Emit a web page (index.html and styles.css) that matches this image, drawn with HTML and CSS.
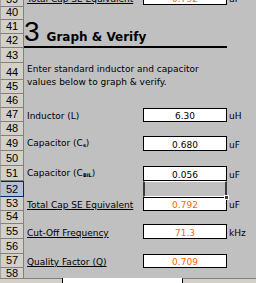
FILE: index.html
```html
<!DOCTYPE html>
<html lang="en">
<head>
  <meta charset="UTF-8" />
  <title>Graph &amp; Verify</title>
  <link rel="stylesheet" href="styles.css">
</head>

<body>
  <div class="window">
    <div class="sheet">
      <!-- row numbers -->
      <div class="row-heads">
        <div class="rh h15">39</div>
        <div class="rh h13">40</div>
        <div class="rh h14">41</div>
        <div class="rh h14">42</div>
        <div class="rh h15">43</div>
        <div class="rh h17">44</div>
        <div class="rh h14">45</div>
        <div class="rh h14">46</div>
        <div class="rh h14">47</div>
        <div class="rh h14">48</div>
        <div class="rh h15">49</div>
        <div class="rh h15">50</div>
        <div class="rh h15">51</div>
        <div class="rh h16 sel">52</div>
        <div class="rh h14">53</div>
        <div class="rh h13">54</div>
        <div class="rh h15">55</div>
        <div class="rh h15">56</div>
        <div class="rh h14">57</div>
        <div class="rh h10 last">58</div>
      </div>

      <!-- cells -->
      <div class="cells">
        <div class="row h13">
          <div class="label"><u>Total Cap SE Equivalent</u></div>
          <div class="box out">0.792</div>
          <div class="unit">uF</div>
        </div>
        <div class="row h15"></div>

        <div class="heading">
          <span class="num">3</span>
          <span class="title">Graph &amp; Verify</span>
        </div>

        <div class="row h15"></div>

        <p class="intro">Enter standard inductor and capacitor<br>values below to graph &amp; verify.</p>

        <div class="row h14"></div>
        <div class="row h14">
          <div class="label">Inductor (L)</div>
          <div class="box">6.30</div>
          <div class="unit">uH</div>
        </div>
        <div class="row h14"></div>
        <div class="row h15">
          <div class="label">Capacitor (C<sub>s</sub>)</div>
          <div class="box">0.680</div>
          <div class="unit">uF</div>
        </div>
        <div class="row h15"></div>
        <div class="row h15">
          <div class="label">Capacitor (C<sub>BIL</sub>)</div>
          <div class="box">0.056</div>
          <div class="unit">uF</div>
        </div>
        <div class="row h16">
          <div class="label"></div>
          <div class="selection"><span class="handle"></span></div>
        </div>
        <div class="row h14">
          <div class="label"><u>Total Cap SE Equivalent</u></div>
          <div class="box out">0.792</div>
          <div class="unit">uF</div>
        </div>
        <div class="row h13"></div>
        <div class="row h15">
          <div class="label"><u>Cut-Off Frequency</u></div>
          <div class="box out">71.3</div>
          <div class="unit">kHz</div>
        </div>
        <div class="row h15"></div>
        <div class="row h14">
          <div class="label"><u>Quality Factor (Q)</u></div>
          <div class="box out">0.709</div>
        </div>
        <div class="row h10"></div>
      </div>
    </div>

    <div class="tabs">
      <div class="tab-nav"></div>
      <div class="tab active"></div>
      <div class="tab"></div>
    </div>
  </div>
</body>
</html>
```

FILE: styles.css
```css
:root {
  --sheet-grey: #c0c0c0;
  --head-grey: #d4d0c8;
  --head-line: #808080;
  --out-orange: #ff6600;
  --sel-blue: #0a246a;
}

body {
  margin: 0;
  background: var(--sheet-grey);
  font-family: 'DejaVu Sans', Verdana, sans-serif;
  font-size: 9px;
  color: #000;
}

.window {
  height: 283px;
  display: flex;
  flex-direction: column;
  overflow: hidden;
}

.sheet {
  flex: 1;
  min-height: 0;
  display: flex;
  overflow: hidden;
}

/* heights shared by both columns */
.h10 { height: 10px; }
.h13 { height: 13px; }
.h14 { height: 14px; }
.h15 { height: 15px; }
.h16 { height: 16px; }
.h17 { height: 17px; }

.row-heads {
  flex: none;
  width: 24px;
  margin-top: -8px;
}

.rh {
  box-sizing: border-box;
  display: flex;
  align-items: flex-end;
  justify-content: center;
  background: var(--head-grey);
  border-left: 1px solid #a0a0a0;
  border-right: 1px solid var(--head-line);
  border-bottom: 1px solid var(--head-line);
  font-family: 'Liberation Sans', Arial, sans-serif;
  font-size: 11px;
  line-height: 12px;
  padding-bottom: 1px;
}

.rh.last {
  border-bottom: none;
  line-height: 10px;
  padding-bottom: 0;
}

.rh.sel {
  background: #b7bfd7;
  border-right-color: var(--sel-blue);
  border-bottom-color: var(--sel-blue);
  box-shadow: inset 0 1px var(--sel-blue);
}

.cells {
  flex: 1;
  margin-top: -8px;
}

.row {
  display: flex;
  align-items: flex-end;
}

.label {
  width: 116px;
  padding-left: 3px;
  line-height: 12px;
  white-space: nowrap;
}

.label sub {
  font-size: 5px;
  font-weight: bold;
  vertical-align: -1px;
}

.box {
  box-sizing: border-box;
  width: 84px;
  height: 100%;
  display: flex;
  align-items: flex-end;
  justify-content: center;
  background: #fff;
  border: 1px solid #000;
  line-height: 10px;
}

.box.out {
  color: var(--out-orange);
}

.unit {
  padding-left: 2px;
  line-height: 12px;
}

.selection {
  position: relative;
  box-sizing: border-box;
  width: 84px;
  height: 100%;
  border-top: 1px solid #fff;
  border-bottom: 1px solid #fff;
  border-left: 2px solid #3c3c3c;
  border-right: 2px solid #3c3c3c;
}

.handle {
  position: absolute;
  right: -4px;
  bottom: -4px;
  width: 3px;
  height: 3px;
  background: #3c3c3c;
  border: 1px solid #fff;
}

.heading {
  box-sizing: border-box;
  width: 203px;
  height: 28px;
  display: flex;
  align-items: baseline;
  border-bottom: 2px solid #000;
}

.heading .num {
  font-family: 'Liberation Sans', Arial, sans-serif;
  font-size: 28px;
  line-height: 23px;
}

.heading .title {
  margin-left: 7px;
  font-weight: bold;
  font-size: 12px;
}

p.intro {
  margin: 0;
  height: 31px;
  padding-left: 3px;
  line-height: 13px;
}

.tabs {
  flex: none;
  height: 5px;
  display: flex;
  background: var(--head-grey);
}

.tab-nav {
  width: 62px;
  border-top: 1px solid var(--head-line);
}

.tab {
  flex: 1;
  border-left: 1px solid #000;
  border-top: 1px solid var(--head-line);
}

.tab.active {
  flex: none;
  width: 119px;
  background: #fff;
  border-top: none;
}
```
